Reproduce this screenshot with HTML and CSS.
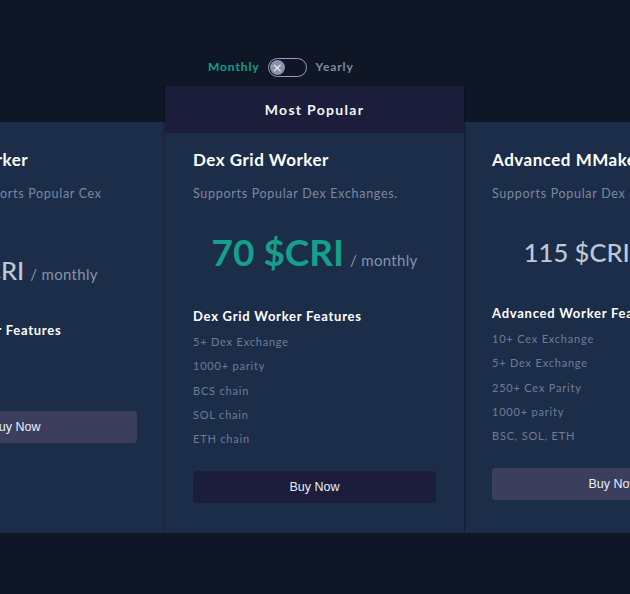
FILE: index.html
```html
<!DOCTYPE html>
<html lang="en">
<head>
<meta charset="utf-8">
<title>Pricing</title>
<link rel="stylesheet" href="styles.css">
</head>
<body>
<section class="pricing">
  <div class="billing">
    <span class="billing-label billing-label--active">Monthly</span>
    <span class="switch"><span class="switch-knob">&times;</span></span>
    <span class="billing-label">Yearly</span>
  </div>
  <div class="viewport">
    <div class="track">
      <article class="card card--side card--left">
        <h3 class="card-title">Cex Grid Worker</h3>
        <p class="card-sub">The Worker Supports Popular Cex Exchanges.</p>
        <div class="price"><span class="price-amount">50 $CRI</span><span class="price-per">/ monthly</span></div>
        <h4 class="feat-title">Cex Grid Worker Features</h4>
        <ul class="feat-list feat-list--blank"></ul>
        <button class="buy buy--side">Buy Now</button>
      </article>
      <article class="card card--popular">
        <div class="popular-head">Most Popular</div>
        <div class="card-body">
          <h3 class="card-title">Dex Grid Worker</h3>
          <p class="card-sub">Supports Popular Dex Exchanges.</p>
          <div class="price price--big"><span class="price-amount">70 $CRI</span><span class="price-per">/ monthly</span></div>
          <h4 class="feat-title feat-title--big">Dex Grid Worker Features</h4>
          <ul class="feat-list">
            <li>5+ Dex Exchange</li>
            <li>1000+ parity</li>
            <li>BCS chain</li>
            <li>SOL chain</li>
            <li>ETH chain</li>
          </ul>
          <button class="buy buy--main">Buy Now</button>
        </div>
      </article>
      <article class="card card--side card--right">
        <h3 class="card-title">Advanced MMaker Worker</h3>
        <p class="card-sub card-sub--nowrap">Supports Popular Dex &amp; Cex Exchanges.</p>
        <div class="price"><span class="price-amount">115 $CRI</span><span class="price-per">/ monthly</span></div>
        <h4 class="feat-title">Advanced Worker Features</h4>
        <ul class="feat-list">
          <li>10+ Cex Exchange</li>
          <li>5+ Dex Exchange</li>
          <li>250+ Cex Parity</li>
          <li>1000+ parity</li>
          <li>BSC, SOL, ETH</li>
        </ul>
        <button class="buy buy--side">Buy Now</button>
      </article>
    </div>
  </div>
</section>
</body>
</html>
```
FILE: styles.css
```css
* { box-sizing: border-box; }
html, body { margin: 0; padding: 0; }
body {
  background: #0f1626;
  font-family: "Lato", "Noto Sans", sans-serif;
  width: 630px;
  height: 594px;
  overflow: hidden;
}
.pricing { padding-top: 57px; }
.billing {
  display: flex;
  align-items: center;
  gap: 8px;
  height: 20px;
  padding-left: 208px;
}
.billing-label {
  font-size: 12px;
  font-weight: 700;
  letter-spacing: 0.9px;
  color: #7f8aa3;
  line-height: 18px;
}
.billing-label:last-child { margin-left: 1px; }
.billing-label--active { color: #14a08a; }
.switch {
  width: 39px;
  height: 19px;
  border: 1.5px solid #9a9db5;
  border-radius: 10px;
  display: flex;
  align-items: center;
  padding-left: 1px;
}
.switch-knob {
  width: 15px;
  height: 15px;
  border-radius: 50%;
  background: #8e91ab;
  color: #eef0f6;
  font-family: "DejaVu Sans", sans-serif;
  font-size: 13px;
  line-height: 15px;
  text-align: center;
}
.viewport {
  margin-top: 9px;
  overflow: hidden;
  height: 447px;
}
.track {
  display: flex;
  align-items: stretch;
  margin-left: -134px;
  width: 902px;
}
.card {
  width: 299px;
  flex: none;
  background: #1c2d4a;
  color: #fff;
}
.card--side {
  margin-top: 36px;
  padding: 27px 28px 0;
  box-shadow: inset 1px 0 0 rgba(10, 18, 34, 0.35);
}
.card--popular {
  border-radius: 4px 4px 0 0;
  box-shadow: 0 0 3px rgba(8, 12, 25, 0.6);
  position: relative;
  z-index: 1;
}
.popular-head {
  height: 47px;
  background: #1b1d3b;
  border-radius: 4px 4px 0 0;
  display: flex;
  align-items: center;
  justify-content: center;
  font-size: 14px;
  font-weight: 700;
  letter-spacing: 1.3px;
  color: #f3f4f8;
}
.card-body { padding: 16px 28px 30px; }
.card-title {
  margin: 0;
  font-size: 17px;
  line-height: 22px;
  font-weight: 700;
  letter-spacing: 0.5px;
  white-space: nowrap;
}
.card-sub {
  margin: 14px 0 0;
  font-size: 12.5px;
  line-height: 18px;
  color: #7c88a0;
  letter-spacing: 0.7px;
}
.card-sub--nowrap { white-space: nowrap; }
.price {
  margin-top: 31px;
  display: flex;
  align-items: baseline;
  justify-content: center;
  gap: 6px;
  white-space: nowrap;
  line-height: 36px;
}
.price-amount {
  font-size: 25.5px;
  font-weight: 500;
  color: #bfc8d7;
}
.price-per {
  font-size: 15px;
  color: #8693aa;
  letter-spacing: 0.3px;
}
.price--big { margin-top: 27px; line-height: 44px; }
.price--big .price-amount {
  font-size: 37px;
  font-weight: 700;
  color: #14a08a;
}
.feat-title {
  margin: 28px 0 0;
  font-size: 13px;
  line-height: 20px;
  font-weight: 700;
  letter-spacing: 0.75px;
  white-space: nowrap;
}
.card--right .feat-title { margin-top: 29px; }
.feat-title--big { margin-top: 24px; }
.feat-list {
  list-style: none;
  margin: 4px 0 0;
  padding: 0;
}
.feat-list li {
  font-size: 11px;
  line-height: 24.3px;
  color: #6f7c95;
  letter-spacing: 0.8px;
  white-space: nowrap;
}
.feat-list--blank { height: 47px; }
.buy {
  display: block;
  width: 100%;
  height: 32px;
  margin-top: 20px;
  border: none;
  border-radius: 4px;
  font-family: "Liberation Sans", Arial, sans-serif;
  font-size: 12.5px;
  color: #eceef5;
  cursor: pointer;
}
.buy--main { background: #1b1d3b; }
.buy--side { background: #3c3e5e; }
```
